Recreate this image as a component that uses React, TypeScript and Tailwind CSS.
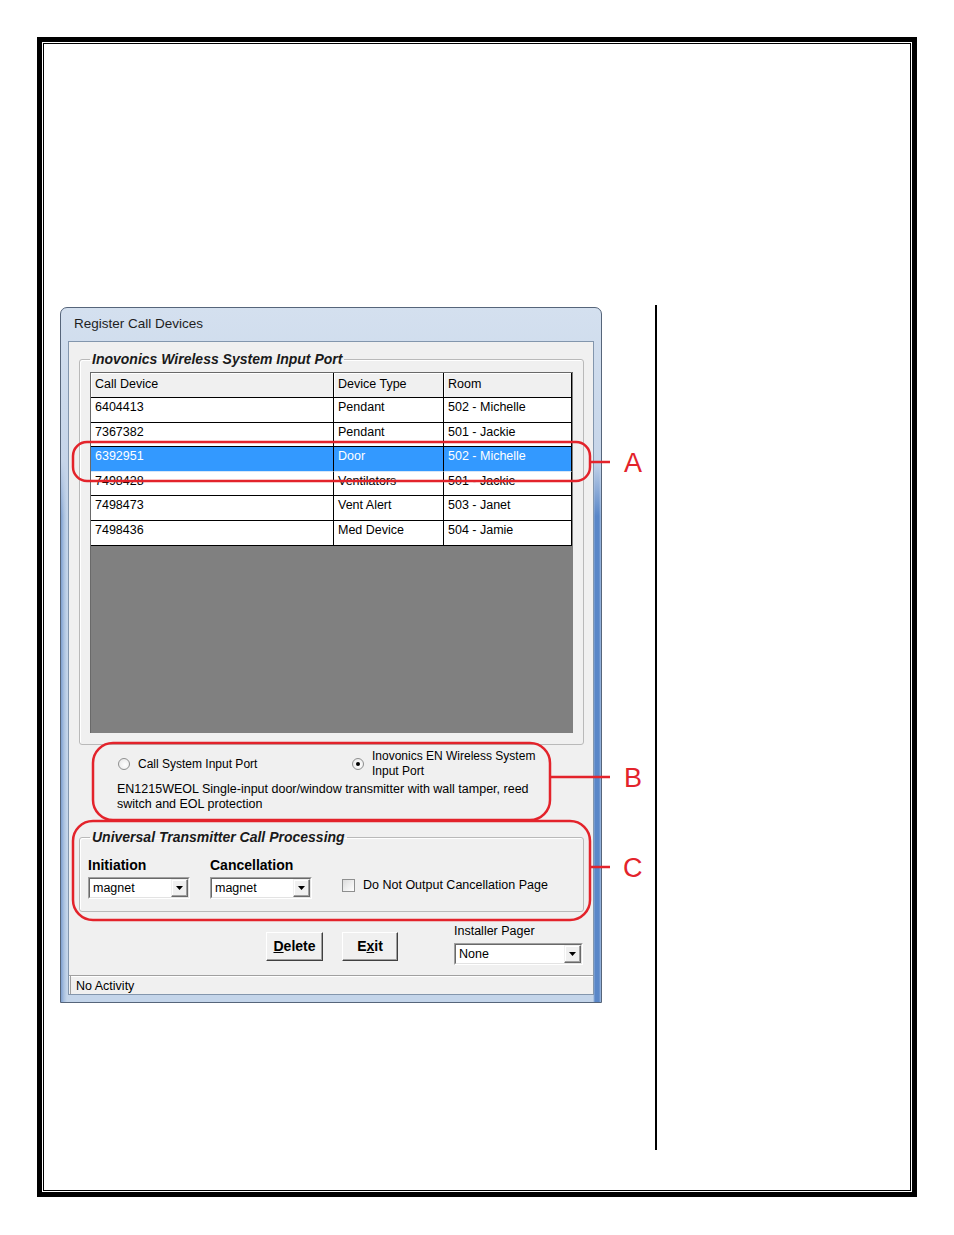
import React from "react";

const rows = [
  { id: "6404413", type: "Pendant", room: "502 - Michelle" },
  { id: "7367382", type: "Pendant", room: "501 - Jackie" },
  { id: "6392951", type: "Door", room: "502 - Michelle", selected: true },
  { id: "7498428", type: "Ventilators", room: "501 - Jackie" },
  { id: "7498473", type: "Vent Alert", room: "503 - Janet" },
  { id: "7498436", type: "Med Device", room: "504 - Jamie" },
];

function Arrow() {
  return (
    <svg width="7" height="4" viewBox="0 0 7 4">
      <path d="M0 0h7L3.5 4z" fill="#000" />
    </svg>
  );
}

function Combo({ value, className }: { value: string; className: string }) {
  return (
    <div className={`h-[22px] border border-t-[#a0a0a0] border-l-[#a0a0a0] border-b-white border-r-white ${className}`}>
      <div className="flex h-full border border-t-[#696969] border-l-[#696969] border-b-[#e3e3e3] border-r-[#e3e3e3] bg-white">
        <span className="flex-1 pl-[3px] text-[12.5px] leading-[18px]">{value}</span>
        <div className="flex w-[17px] items-center justify-center border border-t-[#f0f0f0] border-l-[#f0f0f0] border-b-[#696969] border-r-[#696969] bg-[#f0f0f0] shadow-[inset_-1px_-1px_0_#a0a0a0,inset_1px_1px_0_#fff]">
          <Arrow />
        </div>
      </div>
    </div>
  );
}

function Radio({ checked }: { checked?: boolean }) {
  return (
    <span className="flex h-[12px] w-[12px] shrink-0 items-center justify-center rounded-full border border-[#8e8f8f] bg-[radial-gradient(circle_at_60%_60%,#ffffff,#e4e4e4)]">
      {checked && <span className="h-[4px] w-[4px] rounded-full bg-black" />}
    </span>
  );
}

function WinButton({ children, className }: { children: React.ReactNode; className: string }) {
  return (
    <div
      className={`flex h-[29px] items-center justify-center border border-t-white border-l-white border-b-[#404040] border-r-[#404040] bg-[#f0f0f0] text-[14px] font-bold shadow-[inset_-1px_-1px_0_#a0a0a0] ${className}`}
    >
      {children}
    </div>
  );
}

function Grid() {
  return (
    <div className="ml-[10px] mt-[5px] h-[361px] w-[483px] border-l border-t border-[#696969] bg-[#808080] text-[12.5px]">
      <div className="flex h-[25px] leading-[22px]">
        <div className="w-[243px] border-b border-r border-black bg-[#f0f0f0] pl-[4px] shadow-[inset_1px_1px_0_#fff]">Call Device</div>
        <div className="w-[110px] border-b border-r border-black bg-[#f0f0f0] pl-[4px] shadow-[inset_1px_1px_0_#fff]">Device Type</div>
        <div className="w-[128px] border-b border-r border-black bg-[#f0f0f0] pl-[4px] shadow-[inset_1px_1px_0_#fff]">Room</div>
      </div>
      {rows.map((r) =>
        r.selected ? (
          <div key={r.id} className="flex h-[24.6px] leading-[17px] text-white">
            <div className="w-[243px] border-b border-r border-b-[#d7e6f7] border-r-black bg-[#3399ff] pl-[4px] pt-[1px]">{r.id}</div>
            <div className="w-[110px] border-b border-r border-b-[#d7e6f7] border-r-black bg-[#3399ff] pl-[4px] pt-[1px]">{r.type}</div>
            <div className="w-[128px] border-b border-r border-b-[#d7e6f7] border-r-black bg-[#3399ff] pl-[4px] pt-[1px]">{r.room}</div>
          </div>
        ) : (
          <div key={r.id} className="flex h-[24.6px] leading-[17px] text-black">
            <div className="w-[243px] border-b border-r border-black bg-white pl-[4px] pt-[1px]">{r.id}</div>
            <div className="w-[110px] border-b border-r border-black bg-white pl-[4px] pt-[1px]">{r.type}</div>
            <div className="w-[128px] border-b border-r border-black bg-white pl-[4px] pt-[1px]">{r.room}</div>
          </div>
        )
      )}
    </div>
  );
}

function Window() {
  return (
    <div className="mt-[2px] flex h-[696px] w-[542px] flex-col rounded-t-[7px] border border-[#56657a] bg-[linear-gradient(180deg,#d4e0ef_0%,#c6d5e9_22%,rgba(198,213,233,0)_30%),linear-gradient(90deg,#7e9fcf_0px,#abc2e0_3px,#c4d5ea_6px,#c4d5ea_calc(100%_-_8px),#5a87c8_calc(100%_-_6px),#5a87c8_calc(100%_-_2px),#a3bde0_100%)] px-[7px] pb-[7px]">
      <div className="flex h-[33px] items-center pl-[6px] text-[13.5px] text-[#1e1e1e]">Register Call Devices</div>
      <div className="flex h-[654px] w-[526px] flex-col border border-[#8396ad] bg-[#f0f0f0] text-black">
        {/* Inovonics grid */}
        <fieldset className="ml-[10px] mt-[9px] w-[505px] rounded-[3px] border border-[#b9b9b9] p-0 pb-[11px] shadow-[inset_1px_1px_0_#fff]">
          <legend className="ml-[10px] px-[2px] text-[14px] font-bold italic leading-[16px] text-[#1a1a1a]">
            Inovonics Wireless System Input Port
          </legend>
          <Grid />
        </fieldset>

        {/* Input port selection */}
        <div className="mt-[4px] flex h-[30px] items-center text-[12px]">
          <div className="ml-[49px] flex w-[234px] items-center gap-[8px]">
            <Radio />
            <span>Call System Input Port</span>
          </div>
          <div className="flex items-center gap-[8px]">
            <Radio checked />
            <span className="leading-[15px]">
              Inovonics EN Wireless System
              <br />
              Input Port
            </span>
          </div>
        </div>
        <p className="ml-[48px] mt-[3px] text-[12.5px] leading-[15px]">
          EN1215WEOL Single-input door/window transmitter with wall tamper, reed
          <br />
          switch and EOL protection
        </p>

        {/* Universal transmitter */}
        <fieldset className="ml-[10px] mt-[17px] w-[505px] rounded-[3px] border border-[#b9b9b9] p-0 pb-[12px] shadow-[inset_1px_1px_0_#fff]">
          <legend className="ml-[10px] px-[2px] text-[14px] font-bold italic leading-[16px] text-[#1a1a1a]">
            Universal Transmitter Call Processing
          </legend>
          <div className="mt-[12px] flex items-end">
            <div className="ml-[8px] flex flex-col">
              <span className="text-[14px] font-bold leading-[16px]">Initiation</span>
              <Combo value="magnet" className="mt-[4px] w-[102px]" />
            </div>
            <div className="ml-[20px] flex flex-col">
              <span className="text-[14px] font-bold leading-[16px]">Cancellation</span>
              <Combo value="magnet" className="mt-[4px] w-[102px]" />
            </div>
            <div className="mb-[7px] ml-[30px] flex items-center gap-[8px]">
              <span className="h-[13px] w-[13px] border border-[#8e8f8f] bg-[linear-gradient(135deg,#dcdcdc,#ffffff)]" />
              <span className="text-[12.5px] leading-[14px]">Do Not Output Cancellation Page</span>
            </div>
          </div>
        </fieldset>

        {/* Buttons */}
        <div className="flex items-start">
          <WinButton className="ml-[197px] mt-[20px] w-[57px]">
            <span>
              <span className="underline">D</span>elete
            </span>
          </WinButton>
          <WinButton className="ml-[19px] mt-[20px] w-[56px]">
            <span>
              E<span className="underline">x</span>it
            </span>
          </WinButton>
          <div className="ml-[56px] mt-[12px] flex flex-col">
            <span className="text-[12.5px] leading-[14px]">Installer Pager</span>
            <Combo value="None" className="mt-[5px] w-[129px]" />
          </div>
        </div>

        {/* Status bar */}
        <div className="mt-auto h-[19px] border-t border-[#a0a0a0] px-[1px] shadow-[inset_0_1px_0_#fff]">
          <div className="h-full border-l border-[#a0a0a0] pl-[5px] pt-[2px] text-[12.5px] leading-[17px]">No Activity</div>
        </div>
      </div>
    </div>
  );
}

function Annotations() {
  return (
    <svg className="pointer-events-none absolute left-0 top-0" width={954} height={1235} fill="none">
      <g stroke="#e3232b" strokeWidth={2.5}>
        <rect x={73} y={442} width={517} height={39} rx={14} />
        <path d="M590 462H610" />
        <rect x={93} y={743} width={457} height={77} rx={20} />
        <path d="M550 777H610" />
        <rect x={73} y={821} width={517} height={99} rx={20} />
        <path d="M590 867H610" />
      </g>
      <g fill="#e3232b" fontFamily="'Liberation Sans', Arial, sans-serif" fontSize={27}>
        <text x={624} y={472}>A</text>
        <text x={624} y={787}>B</text>
        <text x={623} y={877}>C</text>
      </g>
    </svg>
  );
}

export default function App() {
  return (
    <div className="relative h-[1235px] w-[954px] bg-white pl-[37px] pt-[37px] font-['Liberation_Sans',Arial,sans-serif]">
      <div className="h-[1160px] w-[880px] border-[5px] border-black p-px">
        <div className="h-full border border-black">
          <div className="flex items-start pl-[16px] pt-[261px]">
            <Window />
            <div className="ml-[53px] h-[845px] w-[2px] bg-black" />
          </div>
        </div>
      </div>
      <Annotations />
    </div>
  );
}
